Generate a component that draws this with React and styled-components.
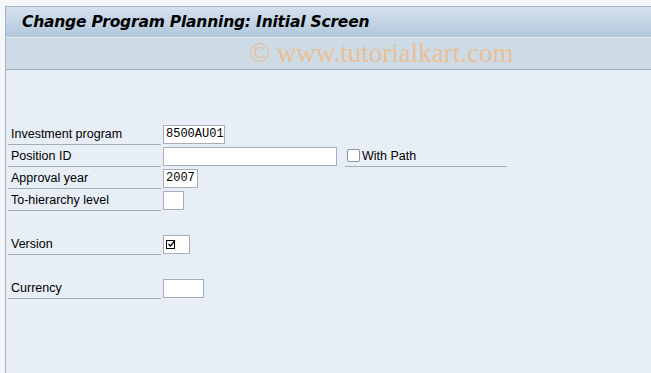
import React from "react";
import styled, { createGlobalStyle } from "styled-components";

const Global = createGlobalStyle`
  html, body {
    margin: 0;
    padding: 0;
    background: #f6f7fa;
    overflow: hidden;
  }
`;

const Frame = styled.div`
  margin: 6px 0 0 5px;
  height: 367px;
  border-left: 1px solid #a6b3c3;
  border-top: 1px solid #a6b3c3;
  background: #e8eef6;
  display: flex;
  flex-direction: column;
`;

const TitleBar = styled.div`
  height: 30px;
  display: flex;
  align-items: center;
  padding-left: 16px;
  background: linear-gradient(#d4e1ee, #b2c7dc);
`;

const Title = styled.h1`
  margin: 0;
  font-family: "DejaVu Sans", "Liberation Sans", sans-serif;
  font-size: 15.5px;
  font-weight: bold;
  font-style: italic;
  color: #000;
  letter-spacing: -0.2px;
`;

const Toolbar = styled.div`
  height: 31px;
  border-top: 1px solid #e4ecf3;
  border-bottom: 1px solid #9eb0c4;
  background: #cddbe7;
  display: flex;
  align-items: center;
  justify-content: center;
  padding-left: 106px;
`;

const Watermark = styled.span`
  font-family: "Liberation Serif", serif;
  font-size: 27px;
  color: #ebbf94;
`;

const Form = styled.div`
  padding: 53px 0 0 2px;
  font-family: "Liberation Sans", Arial, sans-serif;
  font-size: 12.5px;
  color: #000;
`;

const Row = styled.div`
  height: 22px;
  display: flex;
  align-items: center;
`;

const Label = styled.div`
  width: 150px;
  height: 21px;
  line-height: 23px;
  padding-left: 3px;
  border-bottom: 1px solid #a4acb7;
  box-sizing: content-box;
`;

const Field = styled.div`
  margin-left: 2px;
  width: ${(p) => p.w}px;
  height: 19px;
  box-sizing: border-box;
  border: 1px solid #a7aeb8;
  background: #fff;
  font-family: "Liberation Mono", monospace;
  font-size: 12px;
  line-height: 16px;
  padding-left: 2px;
  display: flex;
  align-items: center;
`;

const Extra = styled.div`
  margin-left: 8px;
  width: 162px;
  height: 21px;
  border-bottom: 1px solid #a4acb7;
  display: flex;
  align-items: center;
  gap: 2px;
  padding-left: 2px;
  box-sizing: border-box;
`;

const Box = styled.span`
  width: 13px;
  height: 13px;
  box-sizing: border-box;
  border: 1px solid #8d96a2;
  border-radius: 2px;
  background: #fff;
`;

const Spacer = styled.div`
  height: 22px;
`;

const Check = () => (
  <svg width="11" height="11" viewBox="0 0 11 11">
    <rect x="0.5" y="1.5" width="8" height="8" fill="none" stroke="#000" />
    <path d="M2.5 5 L4.5 7 L9 1.5" fill="none" stroke="#000" strokeWidth="1.2" />
  </svg>
);

export default function App() {
  return (
    <>
      <Global />
      <Frame>
        <TitleBar>
          <Title>Change Program Planning: Initial Screen</Title>
        </TitleBar>
        <Toolbar>
          <Watermark>© www.tutorialkart.com</Watermark>
        </Toolbar>
        <Form>
          <Row>
            <Label>Investment program</Label>
            <Field w={62}>8500AU01</Field>
          </Row>
          <Row>
            <Label>Position ID</Label>
            <Field w={174} />
            <Extra>
              <Box />
              With Path
            </Extra>
          </Row>
          <Row>
            <Label>Approval year</Label>
            <Field w={35}>2007</Field>
          </Row>
          <Row>
            <Label>To-hierarchy level</Label>
            <Field w={21} />
          </Row>
          <Spacer />
          <Row>
            <Label>Version</Label>
            <Field w={27}>
              <Check />
            </Field>
          </Row>
          <Spacer />
          <Row>
            <Label>Currency</Label>
            <Field w={41} />
          </Row>
        </Form>
      </Frame>
    </>
  );
}
